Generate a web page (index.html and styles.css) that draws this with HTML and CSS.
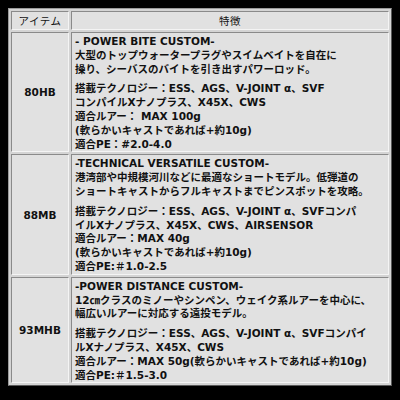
FILE: index.html
```html
<!DOCTYPE html>
<html lang="ja">
<head>
<meta charset="utf-8">
<link rel="stylesheet" href="styles.css">
</head>
<body>
<table class="spec">
  <thead>
    <tr><th class="col-item">アイテム</th><th class="col-feat">特徴</th></tr>
  </thead>
  <tbody>
    <tr>
      <td class="item">80HB</td>
      <td class="feat">
        <p>- POWER BITE CUSTOM-<br>大型のトップウォータープラグやスイムベイトを自在に<br>操り、シーバスのバイトを引き出すパワーロッド。</p>
        <p>搭載テクノロジー：ESS、AGS、V-JOINT α、SVF<br>コンパイルXナノプラス、X45X、CWS<br>適合ルアー： MAX 100g<br>(軟らかいキャストであれば+約10g)<br>適合PE：#2.0-4.0</p>
      </td>
    </tr>
    <tr>
      <td class="item">88MB</td>
      <td class="feat">
        <p>-TECHNICAL VERSATILE CUSTOM-<br>港湾部や中規模河川などに最適なショートモデル。低弾道の<br>ショートキャストからフルキャストまでピンスポットを攻略。</p>
        <p>搭載テクノロジー：ESS、AGS、V-JOINT α、SVFコンパ<br>イルXナノプラス、X45X、CWS、AIRSENSOR<br>適合ルアー：MAX 40g<br>(軟らかいキャストであれば+約10g)<br>適合PE:＃1.0-2.5</p>
      </td>
    </tr>
    <tr>
      <td class="item">93MHB</td>
      <td class="feat">
        <p>-POWER DISTANCE CUSTOM-<br>12㎝クラスのミノーやシンペン、ウェイク系ルアーを中心に、<br>幅広いルアーに対応する遠投モデル。</p>
        <p>搭載テクノロジー：ESS、AGS、V-JOINT α、SVFコンパイ<br>ルXナノプラス、X45X、CWS<br>適合ルアー：MAX 50g(軟らかいキャストであれば+約10g)<br>適合PE:＃1.5-3.0</p>
      </td>
    </tr>
  </tbody>
</table>
</body>
</html>
```
FILE: styles.css
```css
html, body {
  margin: 0;
  padding: 0;
  background: #000;
}
body {
  padding: 8px;
  font-family: "DejaVu Sans", "Noto Sans CJK JP", sans-serif;
  font-size: 10.5px;
  font-weight: bold;
  color: #111;
}
.spec {
  width: 384px;
  border-collapse: separate;
  border-spacing: 2px;
  background: #d4d4d4;
  border: 1px solid #9a9a9a;
  border-right-color: #5a5a5a;
  border-bottom-color: #5a5a5a;
}
.spec th, .spec td {
  background: #e1e1e1;
  border: 1px solid;
  border-color: #8a8a8a #f4f4f4 #f4f4f4 #8a8a8a;
}
.spec th {
  font-family: "Liberation Sans", "Noto Sans CJK JP", sans-serif;
  font-weight: normal;
  font-size: 10.5px;
  letter-spacing: 0.5px;
  height: 17px;
  padding: 0;
}
.col-item { width: 56px; }
.item {
  text-align: center;
  vertical-align: middle;
  padding: 0;
}
.feat {
  padding: 2px 3px 0 3px;
  line-height: 13.8px;
  vertical-align: top;
}
.feat p { margin: 0; }
.feat p + p { margin-top: 6px; }
```
